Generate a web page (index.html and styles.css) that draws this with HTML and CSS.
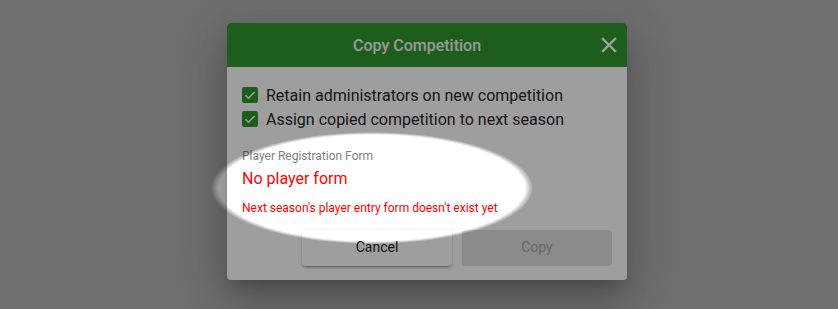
FILE: index.html
```html
<!DOCTYPE html>
<html>
<head>
<meta charset="utf-8">
<link rel="stylesheet" href="styles.css">
</head>
<body>
<div class="stage">
  <div class="dialog">
    <div class="header">
      <span class="title">Copy Competition</span>
      <svg class="close" width="16" height="16" viewBox="0 0 16 16"><path d="M2 2 L14 14 M14 2 L2 14" stroke="#fff" stroke-width="2.4" stroke-linecap="square"/></svg>
    </div>
    <div class="body">
      <div class="check-row">
        <span class="box"><svg width="16" height="16" viewBox="0 0 16 16"><path d="M3.5 8.2 L6.6 11.2 L12.5 5" fill="none" stroke="#fff" stroke-width="1.6"/></svg></span>
        <span class="label">Retain administrators on new competition</span>
      </div>
      <div class="check-row">
        <span class="box"><svg width="16" height="16" viewBox="0 0 16 16"><path d="M3.5 8.2 L6.6 11.2 L12.5 5" fill="none" stroke="#fff" stroke-width="1.6"/></svg></span>
        <span class="label">Assign copied competition to next season</span>
      </div>
      <div class="field">
        <div class="field-label">Player Registration Form</div>
        <div class="field-value">No player form</div>
        <div class="field-help">Next season's player entry form doesn't exist yet</div>
      </div>
      <div class="actions">
        <button class="btn btn-cancel">Cancel</button>
        <button class="btn btn-copy" disabled>Copy</button>
      </div>
    </div>
  </div>
</div>
<div class="spotlight"></div>
</body>
</html>
```

FILE: styles.css
```css
html, body {
  margin: 0;
  padding: 0;
  width: 838px;
  height: 309px;
  overflow: hidden;
  background: #b3b3b3;
  font-family: Roboto, "Noto Sans", Arial, sans-serif;
}
.stage {
  display: flex;
  padding: 23px 0 0 227px;
}
.dialog {
  width: 400px;
  height: 257px;
  background: #fff;
  border-radius: 4px;
  overflow: hidden;
  box-shadow: 0 11px 15px -7px rgba(0,0,0,.2), 0 24px 38px 3px rgba(0,0,0,.14), 0 9px 46px 8px rgba(0,0,0,.12);
  display: flex;
  flex-direction: column;
}
.header {
  height: 44px;
  background: #309830;
  display: flex;
  align-items: center;
  justify-content: center;
  padding-right: 20px;
  position: relative;
}
.title {
  color: #fff;
  font-size: 16px;
  font-weight: 500;
  opacity: .95;
}
.close {
  position: absolute;
  right: 10px;
  top: 14px;
}
.body {
  padding: 16px 15px 14px 15px;
  display: flex;
  flex-direction: column;
  flex: 1;
}
.check-row {
  display: flex;
  align-items: center;
  height: 24px;
  gap: 8px;
}
.box {
  width: 16px;
  height: 16px;
  background: #309830;
  border-radius: 2px;
  display: flex;
}
.label {
  font-size: 16px;
  color: #262626;
}
.field {
  margin-top: 17px;
  display: flex;
  flex-direction: column;
}
.field-label {
  font-size: 12px;
  color: #808080;
  line-height: 16px;
}
.field-value {
  font-size: 16px;
  color: #ff0000;
  line-height: 24px;
  margin-top: 3px;
}
.field-help {
  font-size: 12px;
  color: #ff0000;
  line-height: 16px;
  margin-top: 9px;
}
.actions {
  margin-top: auto;
  display: flex;
  justify-content: flex-end;
  gap: 10px;
}
.btn {
  width: 150px;
  height: 36px;
  border: none;
  border-radius: 4px;
  font-family: inherit;
  font-size: 14px;
  padding: 0 0 2px 0;
}
.btn-cancel {
  background: #fff;
  color: #222;
  box-shadow: 0 3px 1px -2px rgba(0,0,0,.2), 0 2px 2px 0 rgba(0,0,0,.14), 0 1px 5px 0 rgba(0,0,0,.12);
}
.btn-copy {
  background: #e0e0e0;
  color: #a6a6a6;
}
.spotlight {
  position: fixed;
  inset: 0;
  background: radial-gradient(ellipse 161px 56px at 372px 188px, rgba(0,0,0,0) 95%, rgba(0,0,0,.38) 100%);
  pointer-events: none;
}
```
